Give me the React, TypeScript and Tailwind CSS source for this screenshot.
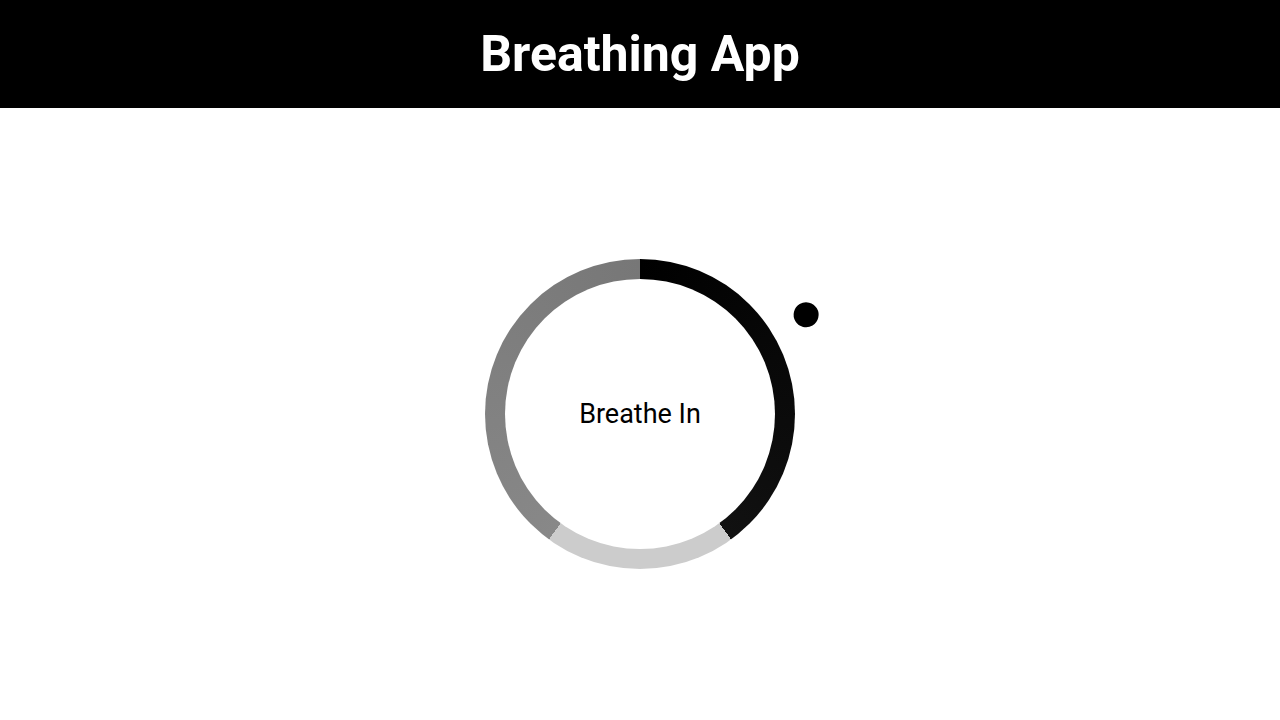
export default function BreathingApp() {
  return (
    <div className="min-h-screen bg-white font-['Roboto',sans-serif]">
      {/* header */}
      <header className="h-[108px] bg-black flex items-center justify-center">
        <h1 className="text-white text-[50px] font-bold leading-none">Breathing App</h1>
      </header>
      {/* main */}
      <main className="h-[612px] flex items-center justify-center">
        <div className="relative w-[310px] h-[310px] rounded-full bg-[conic-gradient(#000_0%,#111_40%,#ccc_40%,#ccc_60%,#888_60%,#777_100%)] flex items-center justify-center">
          {/* inner circle */}
          <div className="w-[270px] h-[270px] rounded-full bg-white flex items-center justify-center">
            <p className="text-[27px] text-black">Breathe In</p>
          </div>
          {/* pointer */}
          <div className="absolute left-1/2 top-1/2 w-0 h-0 rotate-[59deg]">
            <span className="absolute left-[-12.5px] top-[-206px] w-[25px] h-[25px] rounded-full bg-black" />
          </div>
        </div>
      </main>
    </div>
  );
}
